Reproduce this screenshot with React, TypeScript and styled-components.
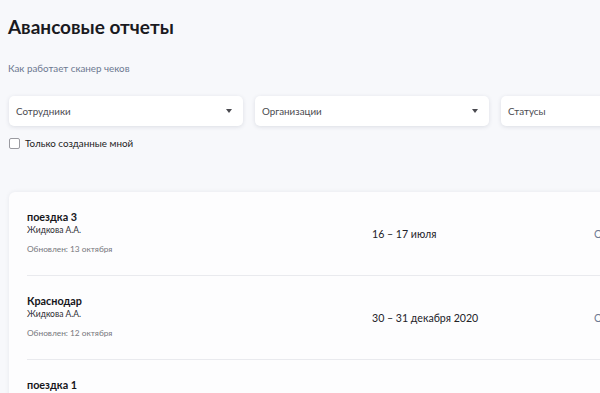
import React from "react";
import styled, { createGlobalStyle } from "styled-components";

const Global = createGlobalStyle`
  html, body { margin: 0; padding: 0; background: #f7f8fb; overflow: hidden; }
  body { font-family: "Lato", "Noto Sans", sans-serif; color: #1f1f24; }
  * { box-sizing: border-box; }
`;

const Page = styled.div`
  width: 760px;
  padding: 15px 0 0 9px;
`;

const Title = styled.h1`
  margin: 0;
  font-size: 19px;
  font-weight: 700;
  line-height: 24px;
  margin-left: -1px;
  color: #1a1a1f;
`;

const HelpLink = styled.a`
  display: block;
  margin-top: 22px;
  font-size: 9.8px;
  line-height: 14px;
  color: #6d7891;
  text-decoration: none;
  margin-left: -1px;
`;

const Filters = styled.div`
  display: grid;
  grid-template-columns: 234px 234px 234px;
  column-gap: 12px;
  margin-top: 21px;
`;

const Select = styled.div`
  height: 30px;
  background: #fff;
  border-radius: 5px;
  box-shadow: 0 1px 4px rgba(40, 50, 80, 0.13);
  display: flex;
  align-items: center;
  justify-content: space-between;
  padding: 0 11px 0 7px;
  font-size: 9.8px;
  color: #4a4a50;
`;

const Arrow = styled.span`
  width: 0;
  height: 0;
  border-left: 3px solid transparent;
  border-right: 3px solid transparent;
  border-top: 4px solid #4a4a50;
`;

const CheckRow = styled.label`
  display: flex;
  align-items: center;
  gap: 5px;
  margin-top: 11px;
  font-size: 9.8px;
  color: #222;
`;

const Box = styled.span`
  width: 11px;
  height: 11px;
  border: 1px solid #9a9aa0;
  border-radius: 2px;
  background: #fff;
`;

const Card = styled.div`
  margin-top: 43px;
  background: #fdfdfe;
  border-radius: 6px;
  box-shadow: 0 0 4px rgba(40, 50, 80, 0.08);
`;

const Row = styled.div`
  height: 84px;
  margin-left: 18px;
  display: grid;
  grid-template-columns: 345px 222px 1fr;
  align-items: center;
  border-bottom: 1px solid #e9eaee;
`;

const Info = styled.div`
  display: flex;
  flex-direction: column;
  align-self: start;
  padding-top: 18px;
`;

const RowTitle = styled.div`
  font-size: 10.8px;
  font-weight: 700;
  line-height: 14px;
  color: #15151a;
`;

const Person = styled.div`
  font-size: 8.5px;
  line-height: 12px;
  color: #2a2a30;
`;

const Updated = styled.div`
  margin-top: 7px;
  font-size: 8.3px;
  line-height: 12px;
  color: #77777d;
`;

const Dates = styled.div`
  font-size: 10.6px;
  color: #222228;
  padding-left: 0;
`;

const Status = styled.div`
  font-size: 10.6px;
  color: #6d7891;
  white-space: nowrap;
  padding-top: 1px;
`;

const rows = [
  { title: "поездка 3", person: "Жидкова А.А.", updated: "Обновлен: 13 октября", dates: "16 – 17 июля" },
  { title: "Краснодар", person: "Жидкова А.А.", updated: "Обновлен: 12 октября", dates: "30 – 31 декабря 2020" },
  { title: "поездка 1", person: "Жидкова А.А.", updated: "Обновлен: 10 октября", dates: "1 – 2 июля" },
];

export default function App() {
  return (
    <>
      <Global />
      <Page>
        <Title>Авансовые отчеты</Title>
        <HelpLink href="#">Как работает сканер чеков</HelpLink>
        <Filters>
          <Select>Сотрудники<Arrow /></Select>
          <Select>Организации<Arrow /></Select>
          <Select>Статусы<Arrow /></Select>
        </Filters>
        <CheckRow>
          <Box />
          Только созданные мной
        </CheckRow>
        <Card>
          {rows.map((r) => (
            <Row key={r.title}>
              <Info>
                <RowTitle>{r.title}</RowTitle>
                <Person>{r.person}</Person>
                <Updated>{r.updated}</Updated>
              </Info>
              <Dates>{r.dates}</Dates>
              <Status>Отправлен</Status>
            </Row>
          ))}
        </Card>
      </Page>
    </>
  );
}
